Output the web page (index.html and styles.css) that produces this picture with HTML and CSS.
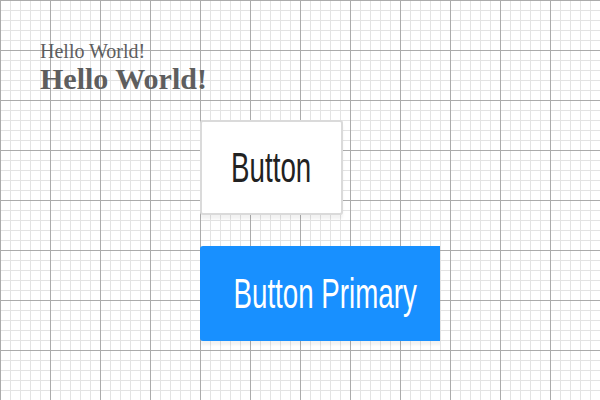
FILE: index.html
```html
<!DOCTYPE html>
<html>
<head>
<meta charset="utf-8">
<link rel="stylesheet" href="styles.css">
</head>
<body>
<div class="page">
  <div class="hello-small">Hello World!</div>
  <div class="hello-big">Hello World!</div>
  <div class="buttons">
    <button class="btn btn-default"><span class="label">Button</span></button>
    <button class="btn btn-primary"><span class="label">Button Primary</span></button>
  </div>
</div>
</body>
</html>
```

FILE: styles.css
```css
html, body {
  margin: 0;
  padding: 0;
}
body {
  width: 600px;
  height: 400px;
  overflow: hidden;
  background:
    linear-gradient(to right, #ababab 1px, transparent 1px) 0 0 / 50px 50px,
    linear-gradient(to bottom, #ababab 1px, transparent 1px) 0 0 / 50px 50px,
    linear-gradient(to right, #e3e3e3 1px, transparent 1px) 0 0 / 10px 10px,
    linear-gradient(to bottom, #e3e3e3 1px, transparent 1px) 0 0 / 10px 10px,
    #ffffff;
}
.page {
  padding: 40px 0 0 40px;
  display: flex;
  flex-direction: column;
}
.hello-small {
  font-family: "Liberation Serif", serif;
  font-size: 20px;
  line-height: 22px;
  color: #5e5e5e;
}
.hello-big {
  font-family: "Liberation Serif", serif;
  font-size: 30px;
  font-weight: bold;
  line-height: 34px;
  color: #5e5e5e;
}
.buttons {
  margin: 24px 0 0 160px;
  width: 240px;
  overflow: hidden;
  padding-bottom: 8px;
  display: flex;
  flex-direction: column;
  align-items: flex-start;
  gap: 31px;
}
.btn {
  box-sizing: border-box;
  height: 95px;
  flex: none;
  display: flex;
  align-items: center;
  justify-content: center;
  padding: 0;
  border-radius: 3px;
  font-family: "Liberation Sans", Arial, sans-serif;
  font-size: 43px;
  line-height: 1;
  box-shadow: 0 4px 3px rgba(0, 0, 0, 0.05);
}
.label {
  display: inline-block;
  white-space: nowrap;
  transform: scaleX(0.645);
}
.btn-default {
  width: 143px;
  background: #ffffff;
  border: 2px solid #dadada;
  color: #222222;
}
.btn-primary {
  width: 250px;
  background: #1890ff;
  border: none;
  color: #ffffff;
}
```
